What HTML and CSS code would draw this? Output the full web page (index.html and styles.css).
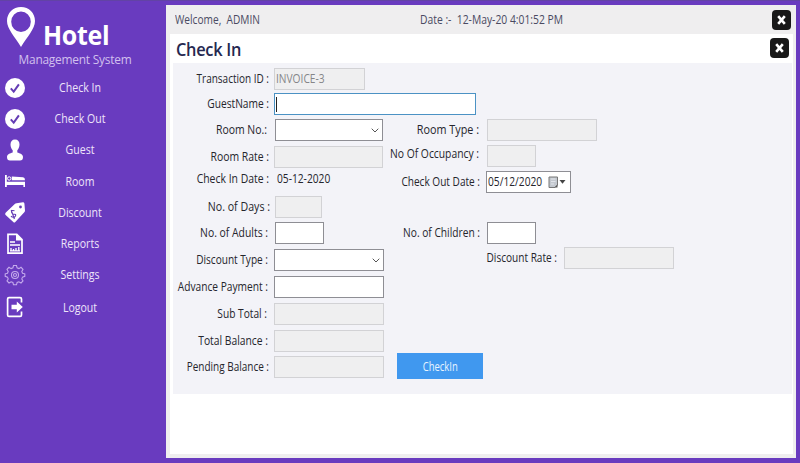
FILE: index.html
```html
<!DOCTYPE html>
<html lang="en">
<head>
<meta charset="utf-8">
<title>Hotel Management System</title>
<link rel="stylesheet" href="styles.css">
</head>
<body>
<div class="app">
  <aside class="sidebar">
    <div class="brand">
      <svg class="pin" viewBox="0 0 28 40"><path fill="#fff" fill-rule="evenodd" d="M14 0C6 0 0 6 0 14c0 8 8 16 14 26 6-10 14-18 14-26C28 6 22 0 14 0zm0 4.500a9.800 10.300 0 1 1 0 20.600a9.800 10.300 0 1 1 0-20.600z"/></svg>
      <span class="brand-name">Hotel</span>
    </div>
    <div class="tagline">Management System</div>
    <nav class="menu">
      <a class="item"><svg viewBox="0 0 20 20"><circle cx="10" cy="10" r="10" fill="#fff"/><path d="M5.800 10.400l2.900 3.200 5.200-7.300" fill="none" stroke="#643cb4" stroke-width="2"/></svg><span>Check In</span></a>
      <a class="item"><svg viewBox="0 0 20 20"><circle cx="10" cy="10" r="10" fill="#fff"/><path d="M5.800 10.400l2.900 3.200 5.200-7.300" fill="none" stroke="#643cb4" stroke-width="2"/></svg><span>Check Out</span></a>
      <a class="item"><svg viewBox="0 0 20 20"><path fill="#fff" d="M10-.5c3 0 4.500 2 4.500 5 0 2.500-1 4.500-2.200 5.800v2.200c2.500 1 5.700 1.500 5.700 4.500 0 2.500-1 3.500-3 3.500H5c-2 0-3-1-3-3.500 0-3 3.200-3.500 5.700-4.500v-2.200C6.500 9 5.500 7 5.500 4.500c0-3 1.500-5 4.500-5z"/></svg><span>Guest</span></a>
      <a class="item"><svg viewBox="0 0 20 20"><path fill="#fff" d="M0 4h1.800v6.700H20V16h-1.600v-2H1.800v2H0zM6.800 5.500L18 6.300q2 .2 2 3H6.800z"/><circle cx="4.200" cy="7.500" r="1.700" fill="none" stroke="#fff"/></svg><span>Room</span></a>
      <a class="item"><svg viewBox="0 0 20 20"><path fill="#fff" d="M11.500 1.200L18 .2q1.200 0 1.400 1.200L20 8.500q0 1-.7 1.700L10.300 20q-1 1-2 0L.6 13q-1-1 0-2.200L9.800 2q.6-.6 1.700-.8z"/><circle cx="15.500" cy="5" r="1.400" fill="#643cb4"/><g fill="none" stroke="#643cb4" stroke-width="1.100"><path d="M9.500 8.800q-3.500-1-3 1.200t3 2.200 0 3q-2.500.3-3.500-1M6.200 8l3.200 9"/></g></svg><span>Discount</span></a>
      <a class="item"><svg viewBox="0 0 20 20"><path fill="none" stroke="#fff" stroke-width="1.700" d="M3 .3h8.800L17 5.600v13.600H3z"/><path fill="#fff" d="M11 0l6.500 6.400H11z"/><path stroke="#fff" stroke-width="1.300" d="M5 8h5M5 11h10M6 17v-3M8.500 17v-2M11 17v-3M13.800 17v-4M5 16.800h10"/></svg><span>Reports</span></a>
      <a class="item"><svg viewBox="0 0 20 20" fill="none" stroke="#c4aaec" stroke-width="1.100"><path d="M8.500.5h3l.6 2.300 1.800.8 2.100-1.300 2 2-1.200 2.200.7 1.700 2.300.6v2.600l-2.300.7-.7 1.800 1.200 2.100-2 2-2.100-1.200-1.800.7-.6 2.300h-3l-.6-2.300-1.800-.7L4 18l-2-2 1.200-2.100-.7-1.800-2.300-.7V8.800l2.300-.6.7-1.700L2 4.300l2-2 2.100 1.300 1.800-.8z"/><circle cx="10" cy="10" r="3.500"/><circle cx="10" cy="10" r="1.500"/></svg><span>Settings</span></a>
      <a class="item last"><svg viewBox="0 0 20 20"><path fill="none" stroke="#fff" stroke-width="1.700" d="M16.500 5.500V2q0-1.400-1.400-1.400H4Q2.600.6 2.600 2v16q0 1.400 1.400 1.400h11.100q1.400 0 1.400-1.400v-3.500"/><path fill="#fff" d="M6.500 7.800h5.300V4.600L17.800 10l-6 5.400v-3.200H6.500z"/></svg><span>Logout</span></a>
    </nav>
  </aside>
  <main class="window">
    <header class="topbar">
      <span class="welcome">Welcome,&nbsp; ADMIN</span>
      <span class="date">Date :-&nbsp; 12-May-20 4:01:52 PM</span>
      <button class="close"><svg viewBox="0 0 19 20"><path d="M6.200 6.200l6.600 7.600M12.800 6.200l-6.600 7.600"/></svg></button>
    </header>
    <section class="page">
      <div class="page-head"><h1>Check In</h1><button class="close"><svg viewBox="0 0 19 20"><path d="M6.200 6.200l6.600 7.600M12.800 6.200l-6.600 7.600"/></svg></button></div>
      <form class="form">
        <div class="col left">
          <div class="row"><label class="l-transaction">Transaction ID :</label><div class="box off w91"><span class="fit">INVOICE-3</span></div></div>
          <div class="row"><label>GuestName :</label><div class="box focus"><i class="caret"></i></div></div>
          <div class="row in1"><label class="l-roomno">Room No.:</label><div class="box select w108"><svg viewBox="0 0 8 5"><path d="M.7.7L4 4 7.300.7"/></svg></div></div>
          <div class="row"><label class="l-rate">Room Rate :</label><div class="box off w109"></div></div>
          <div class="row"><label class="l-in">Check In Date :</label><span class="value fit">05-12-2020</span></div>
          <div class="row in1"><label class="l-days">No. of Days :</label><div class="box off w47"></div></div>
          <div class="row in1"><label class="l-adults">No. of Adults :</label><div class="box w49"></div></div>
          <div class="row"><label class="l-dtype">Discount Type :</label><div class="box select w110"><svg viewBox="0 0 8 5"><path d="M.7.7L4 4 7.300.7"/></svg></div></div>
          <div class="row"><label class="l-adv">Advance Payment :</label><div class="box w110"></div></div>
          <div class="row"><label class="l-sub">Sub Total :</label><div class="box off w110"></div></div>
          <div class="row"><label class="l-total">Total Balance :</label><div class="box off w110"></div></div>
          <div class="row"><label class="l-pending">Pending Balance :</label><div class="box off w110"></div></div>
        </div>
        <div class="col right">
          <div class="row"><label class="l-type">Room Type :</label><div class="box off w110"></div></div>
          <div class="row"><label class="l-occ">No Of Occupancy :</label><div class="box off w49"></div></div>
          <div class="row"><label class="l-out">Check Out Date :</label><div class="box datebox"><span class="fit">05/12/2020</span><svg viewBox="0 0 20 13"><path d="M1 1h8.500v8L7 11.500H1z" fill="#c3c8cf" stroke="#777"/><path d="M3 3h4.500M3 5.500h4.500M3 8h3" stroke="#eef1f5" stroke-width=".7"/><path d="M9.500 8.500v3H6.500z" fill="#555"/><path d="M11.500 4h6l-3 3.800z" fill="#444"/></svg></div></div>
          <div class="row"><label>No. of Children :</label><div class="box w49"></div></div>
          <div class="row drate"><label class="l-drate">Discount Rate :</label><div class="box off w110"></div></div>
          <button type="button" class="submit"><span>CheckIn</span></button>
        </div>
      </form>
    </section>
  </main>
</div>
</body>
</html>
```
FILE: styles.css
```css
* { box-sizing: border-box; }
body { margin: 0; width: 800px; height: 463px; overflow: hidden; font-family: "Open Sans", "Noto Sans", sans-serif; font-size: 12px; background: #693bbf; }
.app { display: flex; height: 463px; border-top: 1px solid #6243a5; padding: 4px 4px 6px 0; }
.sidebar { width: 166px; color: #eee5fa; }
.brand { display: flex; height: 44px; padding: 2px 0 0 7px; }
.pin { width: 28px; height: 40px; flex: none; }
.brand-name { font-weight: 700; font-size: 27px; line-height: 30px; margin: 13px 0 0 8px; letter-spacing: -.3px; color: #fff; transform: scaleX(.925); transform-origin: left; }
.tagline { width: 150px; height: 20px; text-align: center; font-size: 13px; line-height: 20px; letter-spacing: -.25px; color: #d2c0ee; transform: scaleX(.915); }
.menu { padding-top: 3px; }
.item { display: flex; align-items: center; height: 31.2px; padding-left: 5px; }
.item svg { width: 20px; height: 20px; flex: none; overflow: visible; }
.item span { width: 110px; text-align: center; font-size: 12px; transform: scaleX(.88); }
.item.last { padding-top: 3px; }
.window { width: 630px; height: 453px; background: #efeeef; padding: 0 3px 4px 4px; }
.topbar { display: flex; height: 29px; align-items: center; color: #4a4a62; }
.welcome { width: 245px; margin-left: 5px; transform: scaleX(.845); transform-origin: left; }
.date { flex: 1; transform: scaleX(.86); transform-origin: left; }
.close { width: 19px; height: 20px; padding: 0; border: 0; border-radius: 4px; background: #181818; flex: none; }
.close svg { display: block; width: 19px; height: 20px; fill: none; stroke: #fff; stroke-width: 2.600; }
.topbar .close { margin-right: 2px; }
.page { height: 420px; background: #fff; padding: 0 1px 0 3px; }
.page-head { display: flex; height: 29px; align-items: center; justify-content: space-between; padding: 0 3px 1px 3px; }
h1 { margin: 2px 0 0; font-size: 17.5px; line-height: 24px; font-weight: 600; letter-spacing: -.3px; color: #252850; transform: scaleX(.935); transform-origin: left; }
.form { display: flex; height: 331px; background: #f3f3f8; color: #25252c; }
.col { display: grid; align-content: start; }
.left { width: 216px; padding-top: 5px; grid-template-rows: 25px 26px 27px 22px 28px 26px 27px 27px 27px 27px 26px 22px; }
.right { width: 403px; padding-top: 56px; grid-template-rows: 26px 26px 51px 25px 106px 26px; }
.row { display: flex; align-items: center; height: 22px; line-height: 20px; white-space: nowrap; }
.row label { display: flex; justify-content: flex-end; width: 96px; margin-right: 5px; padding-bottom: 1px; flex: none; transform: scaleX(.85); transform-origin: right; }
.in1 label { margin-right: 6px; }
.right .row label { width: 91px; margin-right: 7px; }
.right .drate label { width: 168px; }
.row .l-transaction, .row .l-pending { transform: scaleX(.832); }
.row .l-roomno { transform: translateX(-2px) scaleX(.87); }
.row .l-rate, .row .l-in { transform: scaleX(.868); }
.row .l-days { transform: translateX(1px) scaleX(.885); }
.row .l-adults { transform: translateX(-1px) scaleX(.865); }
.row .l-dtype { transform: translateX(-1px) scaleX(.84); }
.row .l-adv { transform: translateX(-1px) scaleX(.85); }
.row .l-sub { transform: translateX(-2px) scaleX(.85); }
.row .l-total { transform: translateX(-1px) scaleX(.86); }
.row .l-type { transform: translateX(-1px) scaleX(.9); }
.row .l-occ { transform: translate(-1px, -2px) scaleX(.86); }
.row .l-out { transform: scaleX(.84); }
.row .l-drate { transform: scaleX(.84); }
.fit { transform: scaleX(.85); transform-origin: left; }
.box { height: 22px; border: 1px solid #8e8e94; background: #fff; flex: none; position: relative; z-index: 1; display: flex; align-items: center; }
.off { border-color: #d2d2d5; background: #efeff0; color: #858588; padding-left: 1px; }
.focus { width: 202px; border-color: #4b92c4; }
.caret { width: 1px; height: 15px; margin-left: 1px; background: #222; }
.select { justify-content: flex-end; padding-right: 3px; }
.select svg { width: 8px; height: 5px; fill: none; stroke: #555; }
.value { margin-left: 3px; }
.w91 { width: 91px; }
.w108 { width: 108px; }
.w109 { width: 109px; }
.w110 { width: 110px; }
.w47 { width: 47px; }
.w49 { width: 49px; }
.datebox { width: 85px; margin-left: -1px; padding-left: 1px; }
.datebox .fit { width: 60px; flex: none; }
.datebox svg { width: 20px; height: 13px; flex: none; }
.submit { width: 86px; height: 26px; margin-left: 8px; padding: 0; border: 0; background: #4098ef; color: #e8f4ff; font: inherit; }
.submit span { display: inline-block; transform: scaleX(.79); }
```
